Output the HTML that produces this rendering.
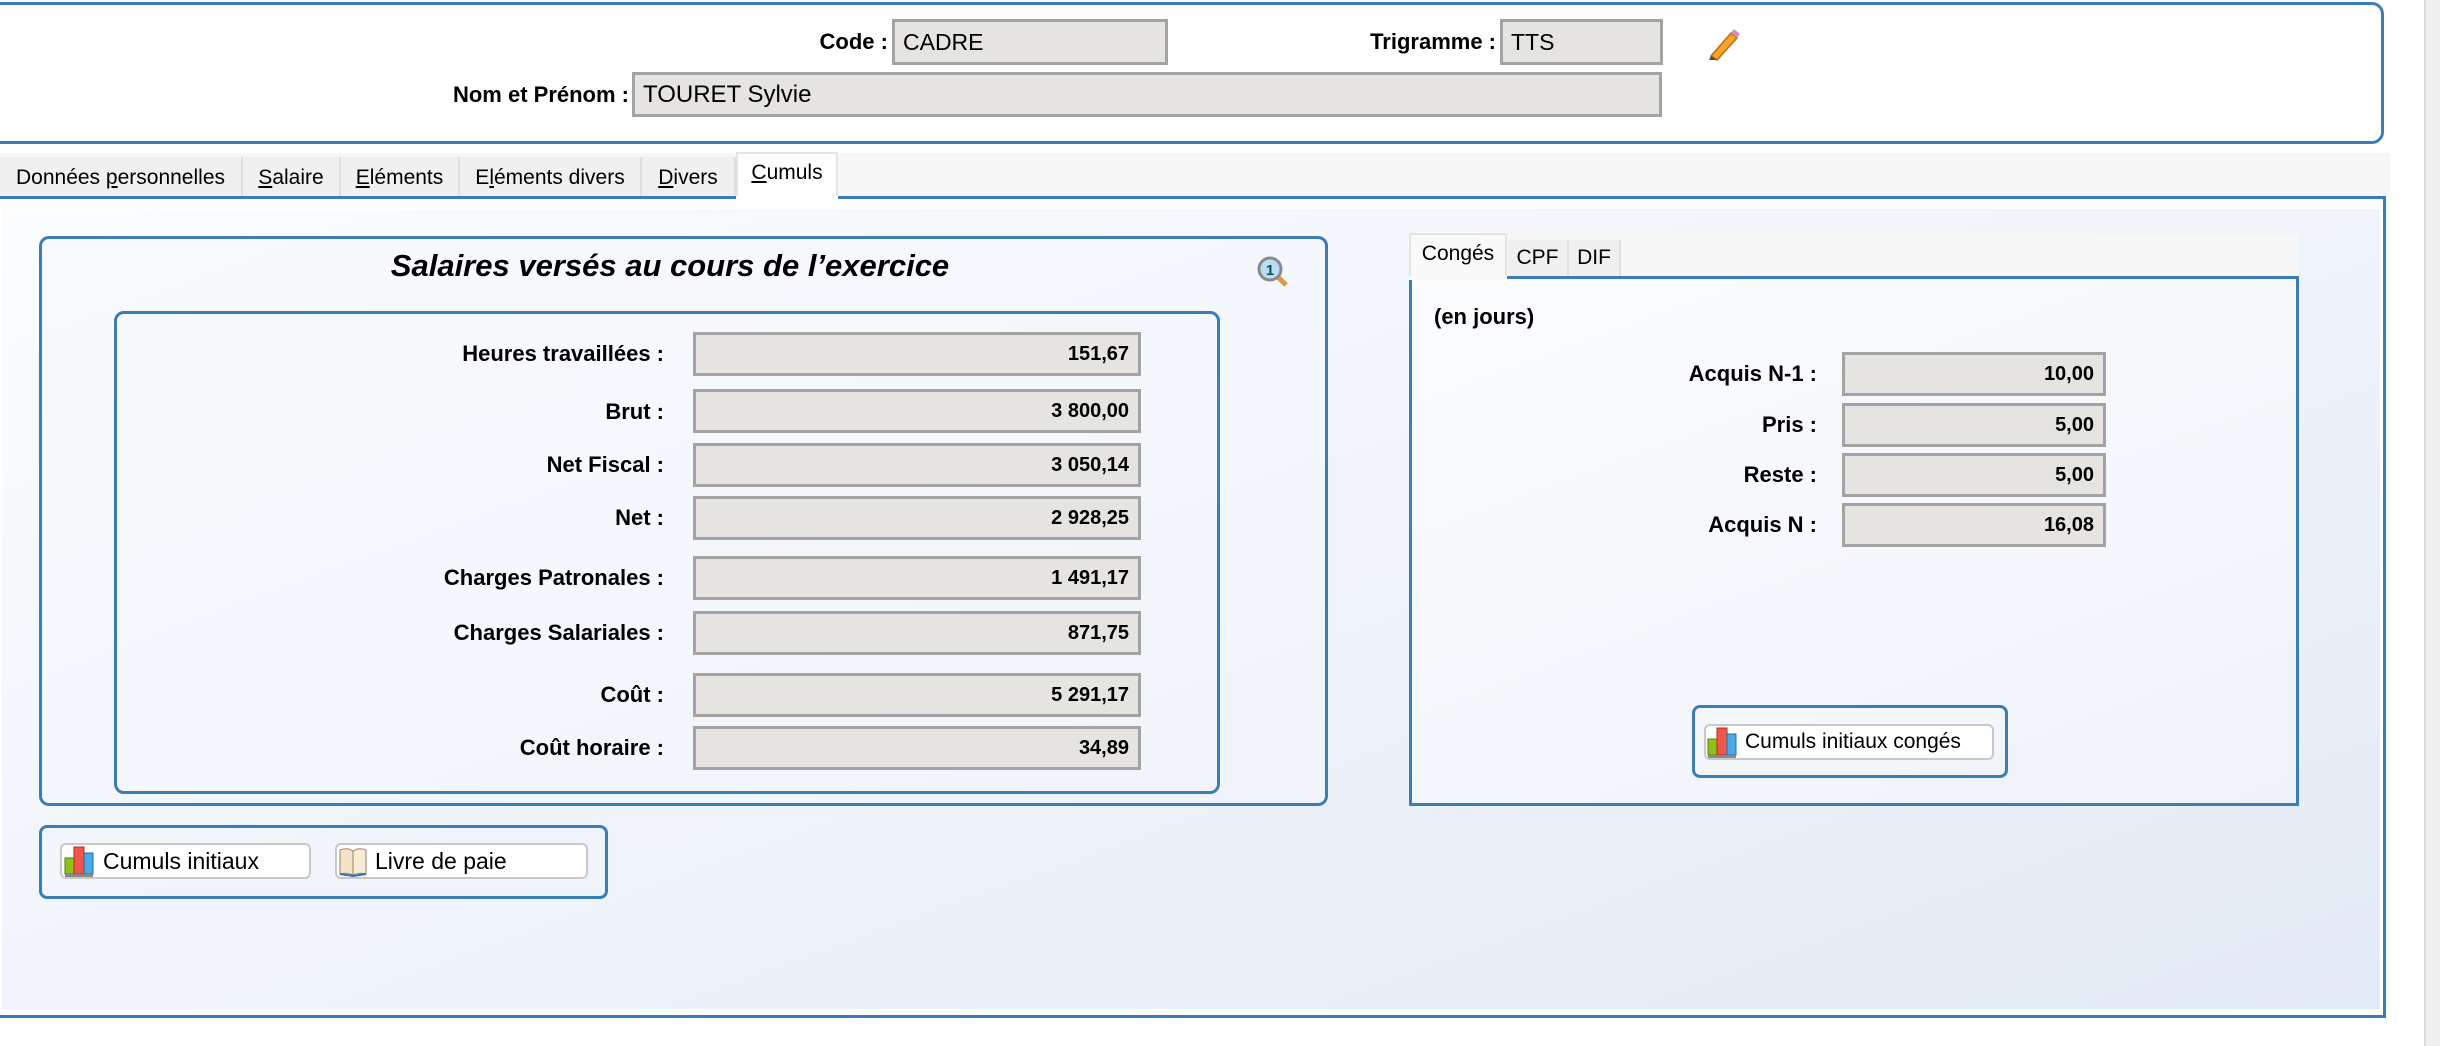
<!DOCTYPE html>
<html><head><meta charset="utf-8"><style>
*{box-sizing:border-box;margin:0;padding:0}
body{width:2440px;height:1046px;background:#fff;font-family:"Liberation Sans",sans-serif;position:relative;overflow:hidden;color:#000}
.a{position:absolute}
.lbl{position:absolute;font-weight:bold;font-size:22px;text-align:right;white-space:nowrap}
.fld{position:absolute;background:#e6e4e0;border:3px solid #a3a3a3;font-size:20px;font-weight:bold;text-align:right;padding-right:9px;display:flex;align-items:center;justify-content:flex-end}
.tf{position:absolute;background:#e6e4e0;border:3px solid #a3a3a3;font-size:23px;padding-left:8px;display:flex;align-items:center;white-space:pre}
.blue{border:3px solid #3b7db5}
.tab{position:absolute;top:157px;height:41px;background:#f0f0f0;border-right:2px solid #e0e0e0;font-size:21px;text-align:center;padding-top:9px;white-space:nowrap}
.btn{position:absolute;background:#fff;border:2px solid #c8c8c8;border-radius:6px;font-size:23px;display:flex;align-items:center;white-space:nowrap}
</style></head><body>
<div class="a" style="left:-6px;top:2px;width:2390px;height:142px;border:3px solid #3b7db5;border-left:none;border-radius:0 12px 12px 0"></div>
<div class="lbl" style="left:700px;top:29px;width:188px">Code :</div>
<div class="tf" style="left:892px;top:19px;width:276px;height:46px">CADRE</div>
<div class="lbl" style="left:1300px;top:29px;width:196px">Trigramme :</div>
<div class="tf" style="left:1500px;top:19px;width:163px;height:46px">TTS</div>
<svg class="a" style="left:1705px;top:25px" width="36" height="36" viewBox="0 0 36 36"><path d="M6 31 L26 8 L32 13 L12 35 Z" fill="#f7a325" stroke="#b86d12" stroke-width="1.5"/><path d="M26 8 L29 4 L35 9 L32 13 Z" fill="#d48ac0"/><path d="M6 31 L4 35 L12 35 Z" fill="#5a4a3a"/></svg>
<div class="lbl" style="left:300px;top:82px;width:329px">Nom et Prénom :</div>
<div class="tf" style="left:632px;top:72px;width:1030px;height:45px;font-size:24px">TOURET Sylvie</div>
<div class="a" style="left:0;top:153px;width:2390px;height:45px;background:#f7f7f7"></div>
<div class="tab" style="left:0;width:243px">Données <u>p</u>ersonnelles</div>
<div class="tab" style="left:243px;width:98px"><u>S</u>alaire</div>
<div class="tab" style="left:341px;width:119px"><u>E</u>léments</div>
<div class="tab" style="left:460px;width:182px">E<u>l</u>éments divers</div>
<div class="tab" style="left:642px;width:94px"><u>D</u>ivers</div>
<div class="tab" style="left:736px;top:152px;height:48px;width:102px;background:#fff;border:2px solid #e4e4e4;border-bottom:none;padding-top:7px"><u>C</u>umuls</div>
<div class="a" style="left:-3px;top:196px;width:2389px;height:822px;border:3px solid #3b7db5;background:#fff"></div>
<div class="a" style="left:736px;top:196px;width:102px;height:4px;background:#fff"></div>
<div class="a" style="left:2px;top:209px;width:2378px;height:800px;background:linear-gradient(160deg,#fbfcfe 0%,#f0f4fa 50%,#e2eaf5 100%)"></div>
<div class="a" style="left:2424px;top:0;width:16px;height:1046px;background:#f0f0f0;border-left:2px solid #dadada"></div>
<div class="a blue" style="left:39px;top:236px;width:1289px;height:570px;border-radius:10px;background:linear-gradient(160deg,#f8fafd,#f0f4fa)"></div>
<div class="a" style="left:280px;top:248px;width:780px;text-align:center;font-size:31px;font-weight:bold;font-style:italic;white-space:nowrap">Salaires versés au cours de l’exercice</div>
<svg class="a" style="left:1255px;top:254px" width="36" height="36" viewBox="0 0 36 36"><line x1="22" y1="22" x2="31" y2="31" stroke="#d89a4a" stroke-width="5"/><circle cx="15" cy="15" r="11" fill="#b8def5" stroke="#8a8a8a" stroke-width="3"/><text x="15" y="21" font-size="15" font-weight="bold" text-anchor="middle" fill="#1a4a4a" font-family="Liberation Sans">1</text></svg>
<div class="a blue" style="left:114px;top:311px;width:1106px;height:483px;border-radius:10px"></div>

<div class="lbl" style="left:300px;top:341px;width:364px">Heures travaillées :</div><div class="fld" style="left:693px;top:332px;width:448px;height:44px">151,67</div>
<div class="lbl" style="left:300px;top:399px;width:364px">Brut :</div><div class="fld" style="left:693px;top:389px;width:448px;height:44px">3 800,00</div>
<div class="lbl" style="left:300px;top:452px;width:364px">Net Fiscal :</div><div class="fld" style="left:693px;top:443px;width:448px;height:44px">3 050,14</div>
<div class="lbl" style="left:300px;top:505px;width:364px">Net :</div><div class="fld" style="left:693px;top:496px;width:448px;height:44px">2 928,25</div>
<div class="lbl" style="left:300px;top:565px;width:364px">Charges Patronales :</div><div class="fld" style="left:693px;top:556px;width:448px;height:44px">1 491,17</div>
<div class="lbl" style="left:300px;top:620px;width:364px">Charges Salariales :</div><div class="fld" style="left:693px;top:611px;width:448px;height:44px">871,75</div>
<div class="lbl" style="left:300px;top:682px;width:364px">Coût :</div><div class="fld" style="left:693px;top:673px;width:448px;height:44px">5 291,17</div>
<div class="lbl" style="left:300px;top:735px;width:364px">Coût horaire :</div><div class="fld" style="left:693px;top:726px;width:448px;height:44px">34,89</div>

<div class="a blue" style="left:39px;top:825px;width:569px;height:74px;border-radius:8px"></div>
<div class="btn" style="left:60px;top:843px;width:251px;height:36px">
<svg width="34" height="34" viewBox="0 0 34 34" style="margin-left:1px"><rect x="2" y="14" width="9" height="16" fill="#8cc21a" stroke="#4e7d0a"/><rect x="11" y="3" width="10" height="27" fill="#f0574a" stroke="#b8281c"/><rect x="21" y="9" width="9" height="21" fill="#4aa9e6" stroke="#1e6fa8"/><rect x="2" y="30" width="28" height="3" fill="#888"/></svg><span style="margin-left:6px">Cumuls initiaux</span></div>
<div class="btn" style="left:335px;top:843px;width:253px;height:36px">
<svg width="34" height="34" viewBox="0 0 34 34"><path d="M3 6 Q10 3 16 7 L16 31 Q10 28 3 30 Z" fill="#f3e3c8" stroke="#a08060"/><path d="M16 7 Q22 3 29 6 L29 30 Q22 28 16 31 Z" fill="#f8ecd6" stroke="#a08060"/><path d="M3 30 L16 32 L29 30" stroke="#2f6fb5" stroke-width="2" fill="none"/></svg><span style="margin-left:4px">Livre de paie</span></div>

<div class="a" style="left:1409px;top:233px;width:888px;height:45px;background:#f7f7f7"></div>
<div class="a" style="left:1409px;top:233px;width:98px;height:47px;background:#f9f9f9;border:2px solid #e4e4e4;border-bottom:none;font-size:21px;text-align:center;padding-top:7px">Congés</div>
<div class="a" style="left:1508px;top:240px;width:61px;height:38px;background:#f0f0f0;border-right:2px solid #e0e0e0;font-size:21px;text-align:center;padding-top:6px">CPF</div>
<div class="a" style="left:1569px;top:240px;width:52px;height:38px;background:#f0f0f0;border-right:2px solid #e0e0e0;font-size:21px;text-align:center;padding-top:6px">DIF</div>
<div class="a" style="left:1409px;top:276px;width:890px;height:530px;border:3px solid #3b7db5;background:linear-gradient(160deg,#fbfcfe,#eff3f9)"></div>
<div class="a" style="left:1409px;top:276px;width:98px;height:4px;background:#f9f9f9"></div>
<div class="a" style="left:1434px;top:304px;font-size:22px;font-weight:bold">(en jours)</div>
<div class="lbl" style="left:1600px;top:361px;width:217px">Acquis N-1 :</div><div class="fld" style="left:1842px;top:352px;width:264px;height:44px">10,00</div>
<div class="lbl" style="left:1600px;top:412px;width:217px">Pris :</div><div class="fld" style="left:1842px;top:403px;width:264px;height:44px">5,00</div>
<div class="lbl" style="left:1600px;top:462px;width:217px">Reste :</div><div class="fld" style="left:1842px;top:453px;width:264px;height:44px">5,00</div>
<div class="lbl" style="left:1600px;top:512px;width:217px">Acquis N :</div><div class="fld" style="left:1842px;top:503px;width:264px;height:44px">16,08</div>
<div class="a blue" style="left:1692px;top:705px;width:316px;height:73px;border-radius:8px"></div>
<div class="btn" style="left:1704px;top:724px;width:290px;height:36px;font-size:21px">
<svg width="34" height="34" viewBox="0 0 34 34"><rect x="2" y="14" width="9" height="16" fill="#8cc21a" stroke="#4e7d0a"/><rect x="11" y="3" width="10" height="27" fill="#f0574a" stroke="#b8281c"/><rect x="21" y="9" width="9" height="21" fill="#4aa9e6" stroke="#1e6fa8"/><rect x="2" y="30" width="28" height="3" fill="#888"/></svg><span style="margin-left:5px">Cumuls initiaux congés</span></div>
</body></html>
